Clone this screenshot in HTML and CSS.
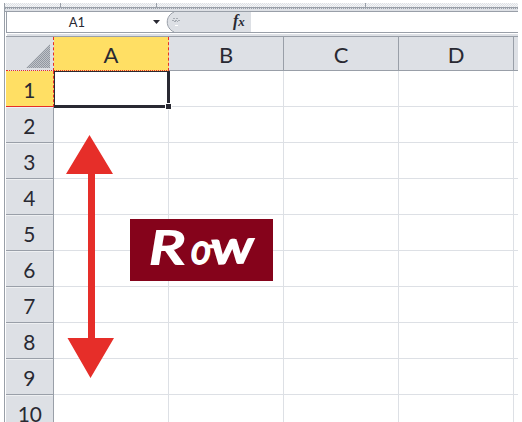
FILE: index.html
```html
<!DOCTYPE html>
<html lang="en">
<head>
<meta charset="utf-8">
<title>Spreadsheet rows</title>
<link rel="stylesheet" href="styles.css">
</head>
<body>
<main class="window">
  <div class="ribbon"><i></i><i></i><i></i></div>
  <div class="band"></div>
  <div class="formula-bar">
    <div class="name-box"><span>A1</span><svg width="7" height="4" viewBox="0 0 7 4"><path d="M0 0h7L3.5 4z" fill="#292932"/></svg></div>
    <div class="functions">
      <svg width="85" height="20" viewBox="0 0 85 20"><path d="M8 0C-1 4-1 16 8 20H85V0z" fill="#dde0e5"/><path d="M8 0C-1 4-1 16 8 20" fill="none" stroke="#999fa8"/><path d="M6 8.500h8M7 6.500h5M8 9.500h4" stroke="#a7acb3" stroke-dasharray="2 1"/><path d="M9 13.500h3" stroke="#fff"/></svg>
      <span class="fx">f<small>x</small></span>
    </div>
    <div class="formula"></div>
  </div>
  <div class="gap"></div>
  <div class="sheet">
    <div class="corner"><svg width="24" height="24" viewBox="0 0 24 24"><defs><pattern id="dots" width="2" height="2" patternUnits="userSpaceOnUse"><path d="M0 0h1v1H0zM1 1h1v1H1z" fill="#9298a1"/></pattern></defs><path d="M24 0v24H0z" fill="#bfc3c9"/><path d="M24 0v24H0z" fill="url(#dots)"/></svg></div>
    <div class="col active">A</div><div class="col">B</div><div class="col">C</div><div class="col">D</div><div class="col"></div>
    <div class="row active"><span>1</span></div><b></b><b></b><b></b><b></b><b></b>
    <div class="row"><span>2</span></div><b></b><b></b><b></b><b></b><b></b>
    <div class="row"><span>3</span></div><b></b><b></b><b></b><b></b><b></b>
    <div class="row"><span>4</span></div><b></b><b></b><b></b><b></b><b></b>
    <div class="row"><span>5</span></div><b></b><b></b><b></b><b></b><b></b>
    <div class="row"><span>6</span></div><b></b><b></b><b></b><b></b><b></b>
    <div class="row"><span>7</span></div><b></b><b></b><b></b><b></b><b></b>
    <div class="row"><span>8</span></div><b></b><b></b><b></b><b></b><b></b>
    <div class="row"><span>9</span></div><b></b><b></b><b></b><b></b><b></b>
    <div class="row"><span>10</span></div><b></b><b></b><b></b><b></b><b></b>
  </div>
</main>
<div class="selection"></div>
<svg class="arrow" width="50" height="244" viewBox="0 0 50 244"><path d="M23.500 0 47 39H29V203H48L24.500 243 1.500 203H22V39H0z" fill="#e62e29"/></svg>
<div class="label"><span class="r">R</span><span class="o">o</span><span class="w">w</span></div>
</body>
</html>
```

FILE: styles.css
```css
* { box-sizing: border-box; }
body {
  margin: 0;
  width: 522px;
  height: 422px;
  overflow: hidden;
  background: #fff;
  color: #292932;
  font-family: Lato, "Open Sans", sans-serif;
}
.window {
  width: 514px;
  height: 419px;
  margin: 3px 0 0 4px;
  border-left: 1px solid #999fa8;
  overflow: hidden;
}
.ribbon {
  height: 4px;
  display: flex;
  background: repeating-conic-gradient(#dde0e5 0 25%, #f6f7f8 0 50%) 0 0 / 2px 2px;
}
.ribbon i { width: 56px; border-right: 1px solid #999fa8; }
.ribbon i:nth-child(2) { width: 96px; }
.ribbon i:nth-child(3) { width: 209px; }
.band {
  height: 5px;
  border-top: 1px solid #999fa8;
  border-bottom: 1px solid #999fa8;
  background: repeating-linear-gradient(90deg, #999fa8 0 1px, #dde0e5 1px 2px) 0 0 / 100% 1px no-repeat #dde0e5;
}
.formula-bar {
  height: 21px;
  margin-left: 1px;
  display: flex;
  border-left: 1px solid #999fa8;
  border-bottom: 1px solid #999fa8;
}
.name-box {
  width: 159px;
  display: flex;
  align-items: center;
  justify-content: flex-end;
  padding-right: 6px;
  font-size: 13px;
}
.name-box span { margin-right: 68px; }
.functions { width: 85px; height: 20px; position: relative; border-right: 1px solid #999fa8; }
.functions svg { display: block; }
.fx {
  position: absolute;
  left: 67px;
  top: 0;
  font: italic bold 16px/18px "Liberation Serif", serif;
}
.fx small { font-size: 13px; }
.formula { flex: 1; }
.gap { height: 3px; border-top: 1px solid #fff; background: #dde0e5; margin-left: 2px; }
.sheet {
  margin-left: 1px;
  border-top: 1px solid #999fa8;
  display: grid;
  grid-template-columns: 48px repeat(4, 115px) 4px;
  grid-template-rows: 34px repeat(10, 36px);
}
.corner {
  background: #dde0e5;
  border-right: 1px dashed #e62e29;
  border-bottom: 1px dotted #e62e29;
  padding: 7px 0 0 20px;
}
.corner svg { display: block; }
.col, .row {
  background: #dde0e5;
  border-right: 1px solid #999fa8;
  border-bottom: 1px solid #999fa8;
  font-size: 22px;
  text-align: center;
}
.col { line-height: 36px; }
.col:nth-child(6) { border-right: 0; }
.row { line-height: 38px; box-shadow: inset 0 1px #eef0f2; }
.row span { display: inline-block; transform: scaleX(.95); }
.row.active, .col.active { background: #ffdf64; box-shadow: none; }
.col.active { border-right: 1px dashed #e62e29; border-bottom: 1px dotted #e62e29; }
.row.active { border-right: 1px dashed #e62e29; border-bottom: 1px solid #e62e29; }
b { border-right: 1px solid #dde0e5; border-bottom: 1px solid #dde0e5; }
b:nth-child(6n) { border-right: 0; }
.selection {
  position: absolute;
  left: 54px;
  top: 71px;
  width: 116px;
  height: 37px;
  border: solid #292932;
  border-width: 1px 3px 3px 1px;
}
.selection::after {
  content: "";
  position: absolute;
  right: -4px;
  bottom: -4px;
  width: 5px;
  height: 5px;
  background: #292932;
  outline: 1px solid #fff;
}
.arrow { position: absolute; left: 66px; top: 135px; }
.label {
  position: absolute;
  left: 130px;
  top: 219px;
  width: 143px;
  height: 62px;
  padding-left: 19px;
  display: flex;
  background: #85031b;
  color: #fff;
  font: italic 46px/56px Lato, sans-serif;
  -webkit-text-stroke: 2px #fff;
  stroke-linejoin: round;
}
.label span { display: block; transform-origin: 0 44px; }
.label .r { width: 42px; transform: scaleX(1.35); }
.label .o { width: 21px; position: relative; transform: scale(.84, .92); }
.label .o::after {
  content: "";
  position: absolute;
  left: 20px;
  top: 24px;
  width: 14px;
  height: 4px;
  border-radius: 2px;
  background: #fff;
}
.label .w { width: 43px; transform: scale(1.28, 1) rotate(-3deg); }
```
